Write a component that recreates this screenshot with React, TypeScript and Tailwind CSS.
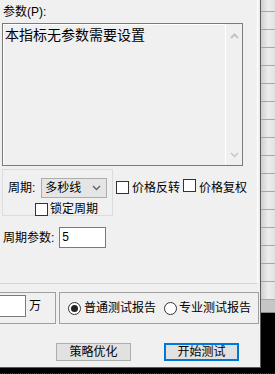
import React from "react";

const font = "font-[family-name:'Liberation_Sans','Noto_Sans_CJK_SC',sans-serif]";

/** small square checkbox, unchecked */
const CheckBox = () => (
  <span className="inline-block h-[13px] w-[13px] shrink-0 border border-[#333333] bg-white" />
);

/** radio circle, optionally checked */
const Radio = ({ checked }: { checked?: boolean }) => (
  <span className="flex h-[13px] w-[13px] shrink-0 items-center justify-center rounded-full border border-[#333333] bg-white">
    {checked && <span className="h-[7px] w-[7px] rounded-full bg-[#222222]" />}
  </span>
);

const Chevron = ({ up, color }: { up?: boolean; color: string }) => (
  <svg width="9" height="6" viewBox="0 0 9 6">
    <path
      d={up ? "M1 5 L4.5 1.5 L8 5" : "M1 1 L4.5 4.5 L8 1"}
      fill="none"
      stroke={color}
      strokeWidth={up ? 2 : 1.3}
    />
  </svg>
);

/** Strategy test dialog crop */
const App = () => {
  const rows = Array.from({ length: 16 });

  return (
    <div className={`flex h-[374px] w-[275px] flex-col overflow-hidden bg-black ${font}`}>
      <div className="flex h-[368px]">
        {/* dialog */}
        <div className="flex h-[368px] w-[261px] flex-col border-r border-b border-[#5a5a5a] bg-[#f0f0f0] text-[12px] leading-[16px] text-black">
          <div className="flex h-[284px] w-[258px] flex-col border-r border-b border-r-white border-b-[#d5d5d5] pl-[2px]">
            <div className="mt-[4px] h-[16px] pl-[1px]">参数(P):</div>

            {/* read-only params box */}
            <div className="mt-[3px] flex h-[143px] w-[241px] border border-[#7a7a7a]">
              <div className="flex-1 border-t border-l border-white pl-[1px] pt-[1px] text-[14px] leading-[18px]">
                本指标无参数需要设置
              </div>
              <div className="flex w-[17px] flex-col items-center justify-between border-l border-white pt-[9px] pb-[7px]">
                <Chevron up color="#c4c4c4" />
                <Chevron color="#c4c4c4" />
              </div>
            </div>

            {/* period row */}
            <div className="mt-[3px] flex items-start">
              <div className="flex h-[47px] w-[111px] flex-col border border-[#dcdcdc]">
                <div className="mt-[8px] flex items-center pl-[5px]">
                  <span>周期:</span>
                  <div className="ml-[6px] flex h-[20px] w-[66px] items-center justify-between border border-[#adadad] bg-[#e5e5e5] pl-[3px] pr-[5px]">
                    <span>多秒线</span>
                    <Chevron color="#606060" />
                  </div>
                </div>
                <div className="mt-[3px] ml-[32px] flex items-center gap-[2px]">
                  <CheckBox />
                  <span>锁定周期</span>
                </div>
              </div>
              <div className="mt-[10px] ml-[3px] flex items-center">
                <CheckBox />
                <span className="ml-[3px]">价格反转</span>
                <span className="ml-[3px]">
                  <CheckBox />
                </span>
                <span className="ml-[3px]">价格复权</span>
              </div>
            </div>

            <div className="mt-[11px] flex items-center pl-[1px]">
              <span>周期参数:</span>
              <div className="ml-[5px] h-[21px] w-[47px] border border-[#7a7a7a] bg-white pl-[2px] pt-[1px]">
                5
              </div>
            </div>
          </div>

          {/* report options */}
          <div className="mt-[8px] flex h-[32px]">
            <div className="ml-[-20px] flex h-[32px] w-[76px] items-start justify-end border border-[#a0a0a0] pt-[2px] pr-[14px]">
              <div className="h-[22px] w-[40px] border border-[#7a7a7a] bg-white" />
              <span className="ml-[3px] leading-[22px]">万</span>
            </div>
            <div className="ml-[3px] flex h-[32px] w-[200px] items-center border border-[#a0a0a0]">
              <span className="ml-[8px]">
                <Radio checked />
              </span>
              <span className="ml-[3px]">普通测试报告</span>
              <span className="ml-[8px]">
                <Radio />
              </span>
              <span className="ml-[2px]">专业测试报告</span>
            </div>
          </div>

          <div className="mt-[19px] flex">
            <button className="ml-[56px] h-[18px] w-[75px] border border-[#adadad] bg-[#e1e1e1] text-[12px] leading-[16px]">
              策略优化
            </button>
            <button className="ml-[33px] h-[18px] w-[75px] border-2 border-[#0078d7] bg-[#e1e1e1] text-[12px] leading-[14px]">
              开始测试
            </button>
          </div>
        </div>

        {/* window behind */}
        <div className="flex h-[313px] flex-1 flex-col">
          <div className="h-[12px] border-b border-[#a8a8a8] bg-gradient-to-r from-[#cfcfcf] via-[#ededed] to-[#e2e2e2]" />
          {rows.map((_, i) => (
            <div
              key={i}
              className="h-[18px] border-b border-[#a8a8a8] bg-gradient-to-r from-[#cfcfcf] via-[#ededed] to-[#e2e2e2]"
            />
          ))}
          <div className="flex-1 border-b border-[#8a8a8a] bg-[#c6c6c6]" />
        </div>
      </div>
      <div className="h-[6px] border-b border-dotted border-[#7a1010]" />
    </div>
  );
};

export default App;
